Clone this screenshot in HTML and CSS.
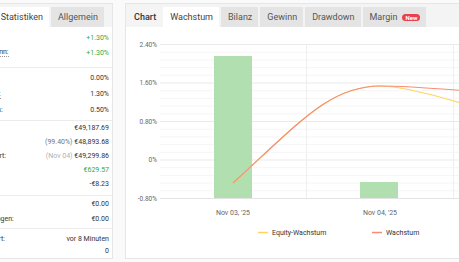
FILE: index.html
```html
<!doctype html>
<html>
	<head>
		<meta charset="utf-8">
		<link rel="stylesheet" href="styles.css">
	</head>
	<body>
		<div class="page">
			<section class="panel side">
				<div class="tabbar">
					<span class="tab-label">Info</span>
					<a class="tab active">Statistiken</a>
					<a class="tab">Allgemein</a>
				</div>
				<div class="group group-gain">
					<div class="row"><span class="label">Zuwachs:</span><span class="val up">+1.30%</span></div>
					<div class="row"><span class="label tip">Abs. Gewinn:</span><span class="val up">+1.30%</span></div>
				</div>
				<div class="group group-rate">
					<div class="row"><span class="label tip">Täglich:</span><span class="val">0.00%</span></div>
					<div class="row"><span class="label tip">Monatlich:</span><span class="val">1.30%</span></div>
					<div class="row"><span class="label">Drawdown:</span><span class="val">0.50%</span></div>
				</div>
				<div class="group group-balance">
					<div class="row"><span class="label">Saldo:</span><span class="val">€49,187.69</span></div>
					<div class="row"><span class="label">Equity:</span><span class="val"><span class="note">(99.40%)</span> €48,893.68</span></div>
					<div class="row"><span class="label">Höchstwert:</span><span class="val"><span class="note light">(Nov 04)</span> €49,299.86</span></div>
					<div class="row"><span class="label">Profit:</span><span class="val up">€629.57</span></div>
					<div class="row"><span class="label">Zinsen:</span><span class="val">-€8.23</span></div>
				</div>
				<div class="group group-flow">
					<div class="row"><span class="label">Einlagen:</span><span class="val">€0.00</span></div>
					<div class="row"><span class="label">Auszahlungen:</span><span class="val">€0.00</span></div>
				</div>
				<div class="group group-meta">
					<div class="row"><span class="label">Aktualisiert:</span><span class="val">vor 8 Minuten</span></div>
					<div class="row"><span class="label">Tracking:</span><span class="val">0</span></div>
				</div>
			</section>

			<section class="panel chart-panel">
				<div class="tabbar">
					<span class="tab-label strong">Chart</span>
					<a class="tab active">Wachstum</a>
					<a class="tab">Bilanz</a>
					<a class="tab">Gewinn</a>
					<a class="tab">Drawdown</a>
					<a class="tab">Margin <span class="badge">New</span></a>
				</div>
				<svg class="chart" width="478" height="231" viewBox="126 27 478 231">
					<!-- grid -->
					<path class="grid-minor" d="M160 52.2H604M160 59.9H604M160 67.6H604M160 75.3H604M160 90.7H604M160 98.4H604M160 106.1H604M160 113.8H604M160 129.2H604M160 136.9H604M160 144.6H604M160 152.3H604M160 167.7H604M160 175.4H604M160 183.1H604M160 190.8H604"/>
					<path class="grid-major" d="M160 44.5H604M160 83H604M160 121.5H604M160 160H604"/>
					<path class="grid-vert" d="M306.5 44V198M453.5 44V198"/>
					<path class="axis" d="M160 198.5H604"/>

					<!-- bars -->
					<rect class="bar" x="214" y="56" width="38" height="142"/>
					<rect class="bar" x="360" y="182" width="38" height="16"/>

					<!-- lines -->
					<path class="line-equity" d="M233 183C300 122 330 86 380 86C410 86 470 106 527 122"/>
					<path class="line-growth" d="M233 183C300 122 330 86 380 86C420 86 480 92 527 96"/>

					<!-- y axis -->
					<g class="y-labels">
						<text x="157" y="46.5">2.40%</text>
						<text x="157" y="85">1.60%</text>
						<text x="157" y="123.5">0.80%</text>
						<text x="157" y="162">0%</text>
						<text x="157" y="200.5">-0.80%</text>
					</g>

					<!-- x axis -->
					<g class="x-labels">
						<text x="233" y="214.5">Nov 03, '25</text>
						<text x="380" y="214.5">Nov 04, '25</text>
					</g>

					<!-- legend -->
					<path class="legend-equity" d="M258 232.5H268"/>
					<text class="legend" x="272" y="234.8">Equity-Wachstum</text>
					<path class="legend-growth" d="M372 232.5H382"/>
					<text class="legend" x="386" y="234.8">Wachstum</text>
				</svg>
			</section>
		</div>
	</body>
</html>
```

FILE: styles.css
```css
html, body{
	margin: 0;
	padding: 0;
	overflow: hidden;
}
body{
	background: #fafafa;
	font-family: Roboto, "Liberation Sans", sans-serif;
	color: #333;
}

/**
 * page layout
 */
.page{
	display: flex;
	gap: 12px;
	padding-top: 3px;
}
.panel{
	background: #fff;
	border: 1px solid #e6e6e6;
	box-sizing: border-box;
	height: 256px;
	flex-shrink: 0;
}
.side{
	margin-left: -38px;
	width: 151px;
}
.chart-panel{
	width: 480px;
}

/**
 * tab bars
 */
.tabbar{
	display: flex;
	align-items: flex-end;
	height: 23px;
	background: #f4f4f4;
	font-size: 9px;
}
.tab-label{
	align-self: stretch;
	padding: 3px 7px 0 8px;
	line-height: 20px;
	color: #333;
}
.tab-label.strong{
	font-weight: 500;
}
.tab{
	display: flex;
	align-items: center;
	height: 20px;
	padding: 0 6px 0 7px;
	margin-right: 2px;
	background: #e4e4e4;
	color: #555;
	cursor: pointer;
	white-space: nowrap;
}
.tab.active{
	background: #fff;
	color: #444;
}
.badge{
	display: inline-block;
	margin-left: 5px;
	padding: 0 3px;
	border-radius: 4px;
	background: #e8404e;
	color: #fff;
	font-size: 6px;
	font-weight: 700;
	line-height: 7px;
}

/**
 * statistics table
 */
.group{
	border-bottom: 1px solid #ececec;
	padding: 0 3px 0 5px;
	font-size: 7px;
}
.group:last-child{
	border-bottom: none;
}
.row{
	display: flex;
	justify-content: space-between;
	align-items: center;
	white-space: nowrap;
}
.group-gain{ padding-top: 3px; padding-bottom: 7px; }
.group-gain .row{ height: 15px; }
.group-rate{ padding-top: 2px; padding-bottom: 2px; }
.group-rate .row{ height: 16px; }
.group-balance{ padding-bottom: 4px; }
.group-balance .row{ height: 14px; }
.group-flow{ padding-bottom: 2px; }
.group-flow .row{ height: 15px; }
.group-meta{ padding-top: 4px; }
.group-meta .row{ height: 12px; }

.label.tip{
	border-bottom: 1px dotted #999;
}
.val{
	color: #333;
}
.val.up{
	color: #2eaa4a;
}
.note{
	color: #777;
}
.note.light{
	color: #b0b0b0;
}

/**
 * chart
 */
.chart{
	display: block;
	font-family: Roboto, "Liberation Sans", sans-serif;
}
.grid-minor{
	stroke: #f5f5f5;
	stroke-width: 1;
	fill: none;
}
.grid-major{
	stroke: #e9e9e9;
	stroke-width: 1;
	fill: none;
}
.grid-vert{
	stroke: #eeeeee;
	stroke-width: 1;
	fill: none;
}
.axis{
	stroke: #e3e3e3;
	stroke-width: 1;
}
.bar{
	fill: #b2dfb0;
}
.line-equity{
	fill: none;
	stroke: #ffd45e;
	stroke-width: 1.2;
}
.line-growth{
	fill: none;
	stroke: #f58d78;
	stroke-width: 1.2;
}
.y-labels text{
	font-size: 6.5px;
	fill: #666;
	text-anchor: end;
}
.x-labels text{
	font-size: 7px;
	fill: #666;
	text-anchor: middle;
}
.legend{
	font-size: 7px;
	fill: #333;
}
.legend-equity{
	stroke: #ffd45e;
	stroke-width: 1.5;
}
.legend-growth{
	stroke: #f58d78;
	stroke-width: 1.5;
}
```
